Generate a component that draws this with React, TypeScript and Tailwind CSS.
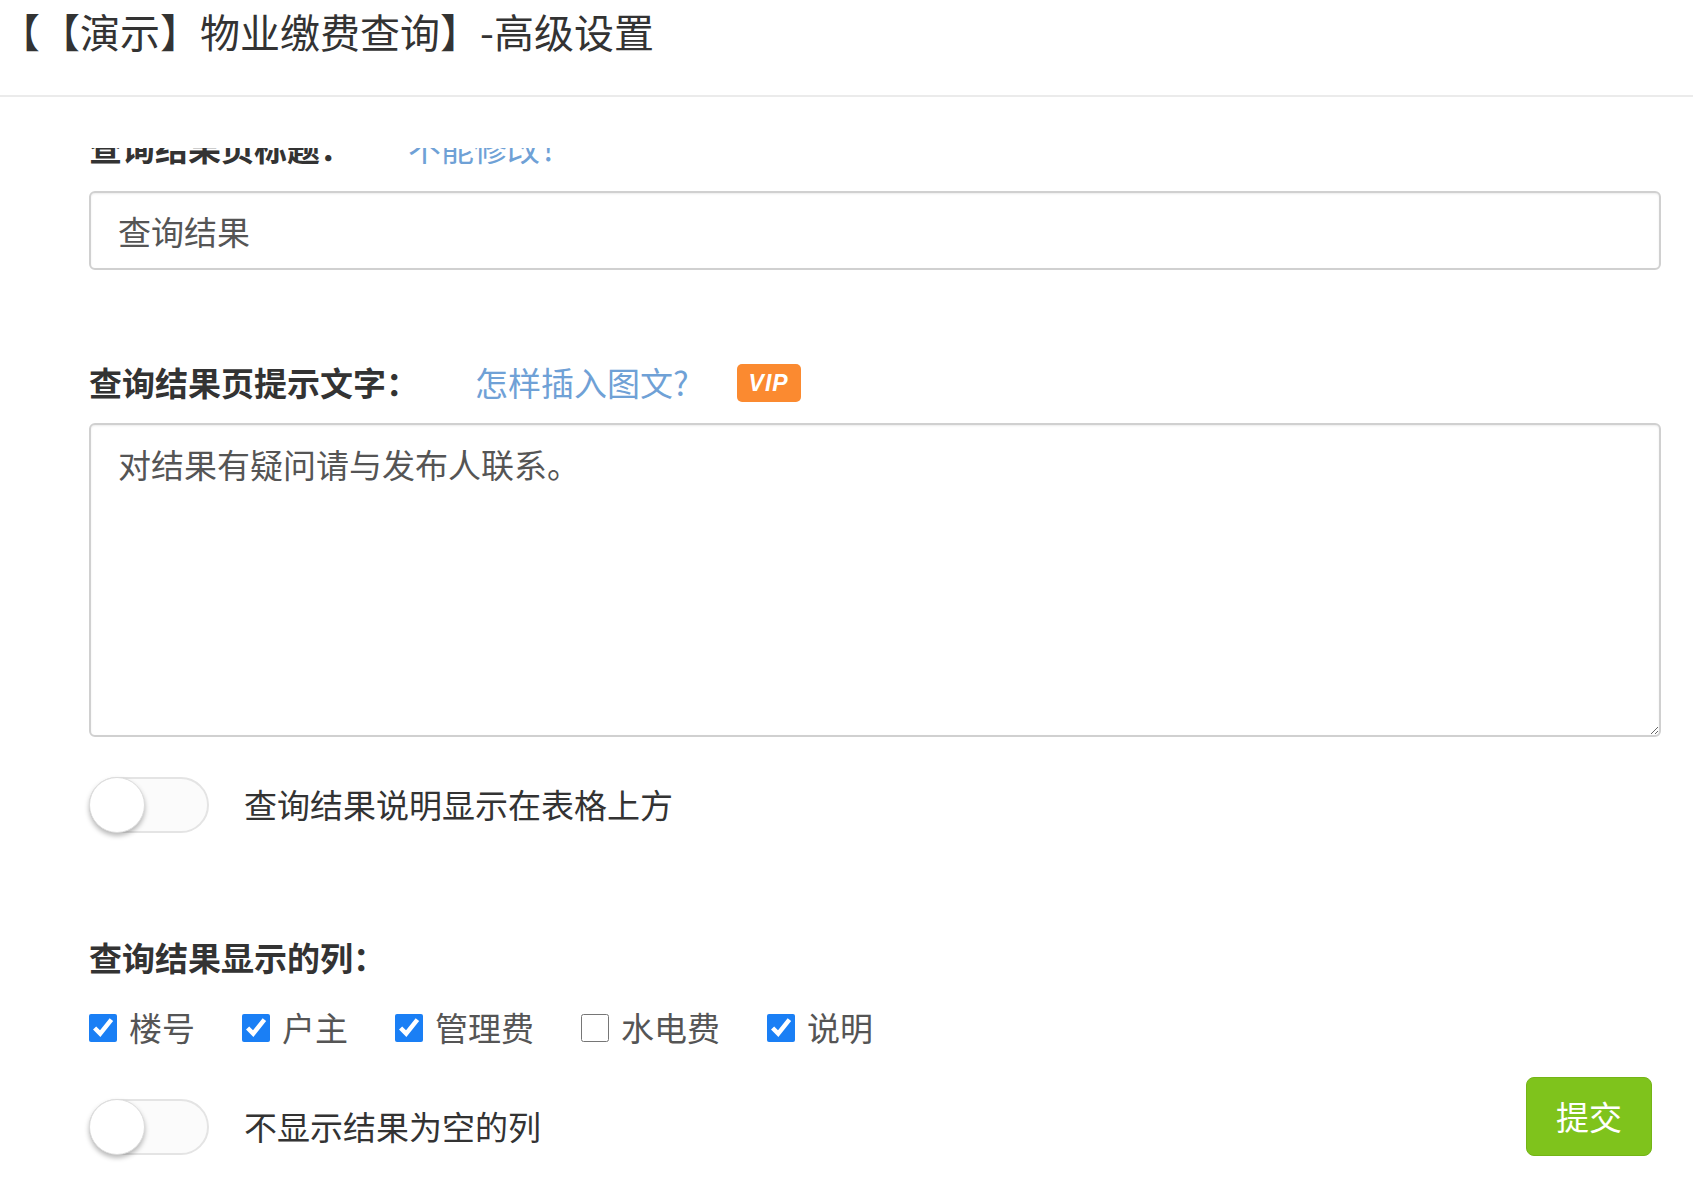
import React from "react";

const Toggle: React.FC = () => (
  <div className="relative w-[120px] h-[56px] rounded-full border-2 border-[#e4e4e4] bg-[#fbfbfb] shrink-0">
    <div className="absolute left-[-2px] top-[-2px] w-[56px] h-[56px] rounded-full bg-white border border-[#dcdcdc] shadow-[0_3px_5px_rgba(0,0,0,0.28)]" />
  </div>
);

const columns = [
  { name: "楼号", checked: true },
  { name: "户主", checked: true },
  { name: "管理费", checked: true },
  { name: "水电费", checked: false },
  { name: "说明", checked: true },
];

const App: React.FC = () => {
  return (
    <div className="w-full h-[1177px] flex flex-col overflow-hidden bg-white [text-spacing-trim:space-all] font-['Noto_Sans_CJK_SC','Noto_Sans',sans-serif]">
      {/* 标题 */}
      <div className="h-[97px] shrink-0 border-b-2 border-[#ebebeb]">
        <h1 className="h-[62px] leading-[62px] text-[40px] font-normal text-[#333] whitespace-nowrap">
          【【演示】物业缴费查询】-高级设置
        </h1>
      </div>

      {/* 设置内容（已向下滚动） */}
      <div className="mt-[51px] flex-1 overflow-hidden pl-[89px] pr-[32px]">
        <div className="-mt-[22px]">
          <div className="flex items-center h-[44px]">
            <span className="text-[33px] font-bold text-[#333]">查询结果页标题：</span>
            <span className="ml-[55px] text-[33px] text-[#6fa1d6]">不能修改！</span>
          </div>
          <input
            readOnly
            value="查询结果"
            className="mt-[21px] block w-full h-[79px] border-2 border-[#d0d0d0] rounded-[6px] px-[27px] text-[33px] text-[#555] outline-none shadow-[inset_0_1px_2px_rgba(0,0,0,0.08)]"
          />

          <div className="mt-[91px] flex items-center h-[44px]">
            <span className="text-[33px] font-bold text-[#333]">查询结果页提示文字：</span>
            <span className="ml-[56px] text-[33px] text-[#6fa1d6]">怎样插入图文?</span>
            <span className="ml-[48px] w-[64px] h-[38px] rounded-[5px] bg-[#fb8a30] flex items-center justify-center text-white text-[23px] font-bold italic font-['Liberation_Sans',sans-serif] tracking-[1px]">
              VIP
            </span>
          </div>
          <textarea
            readOnly
            value="对结果有疑问请与发布人联系。"
            className="mt-[18px] block w-full h-[314px] border-2 border-[#d0d0d0] rounded-[6px] pt-[17px] px-[27px] text-[33px] leading-[44px] text-[#555] outline-none shadow-[inset_0_1px_2px_rgba(0,0,0,0.08)]"
          />

          <div className="mt-[40px] flex items-center gap-[35px]">
            <Toggle />
            <span className="text-[33px] text-[#333]">查询结果说明显示在表格上方</span>
          </div>

          <div className="mt-[103px] flex items-center h-[44px]">
            <span className="text-[33px] font-bold text-[#333]">查询结果显示的列：</span>
          </div>

          <div className="mt-[26px] flex items-center h-[44px] gap-[47px]">
            {columns.map((col) => (
              <label key={col.name} className="flex items-center">
                <input
                  type="checkbox"
                  defaultChecked={col.checked}
                  className="w-[28px] h-[28px] accent-[#1a7ff5]"
                />
                <span className="ml-[12px] text-[33px] text-[#555]">{col.name}</span>
              </label>
            ))}
          </div>

          <div className="mt-[27px] flex items-end justify-between">
            <div className="flex items-center gap-[35px] mb-[1px]">
              <Toggle />
              <span className="text-[33px] text-[#333]">不显示结果为空的列</span>
            </div>
            <button className="mr-[9px] w-[126px] h-[79px] rounded-[8px] bg-[#7fc31c] border border-[#74b516] text-white text-[33px]">
              提交
            </button>
          </div>
        </div>
      </div>
    </div>
  );
};

export default App;
